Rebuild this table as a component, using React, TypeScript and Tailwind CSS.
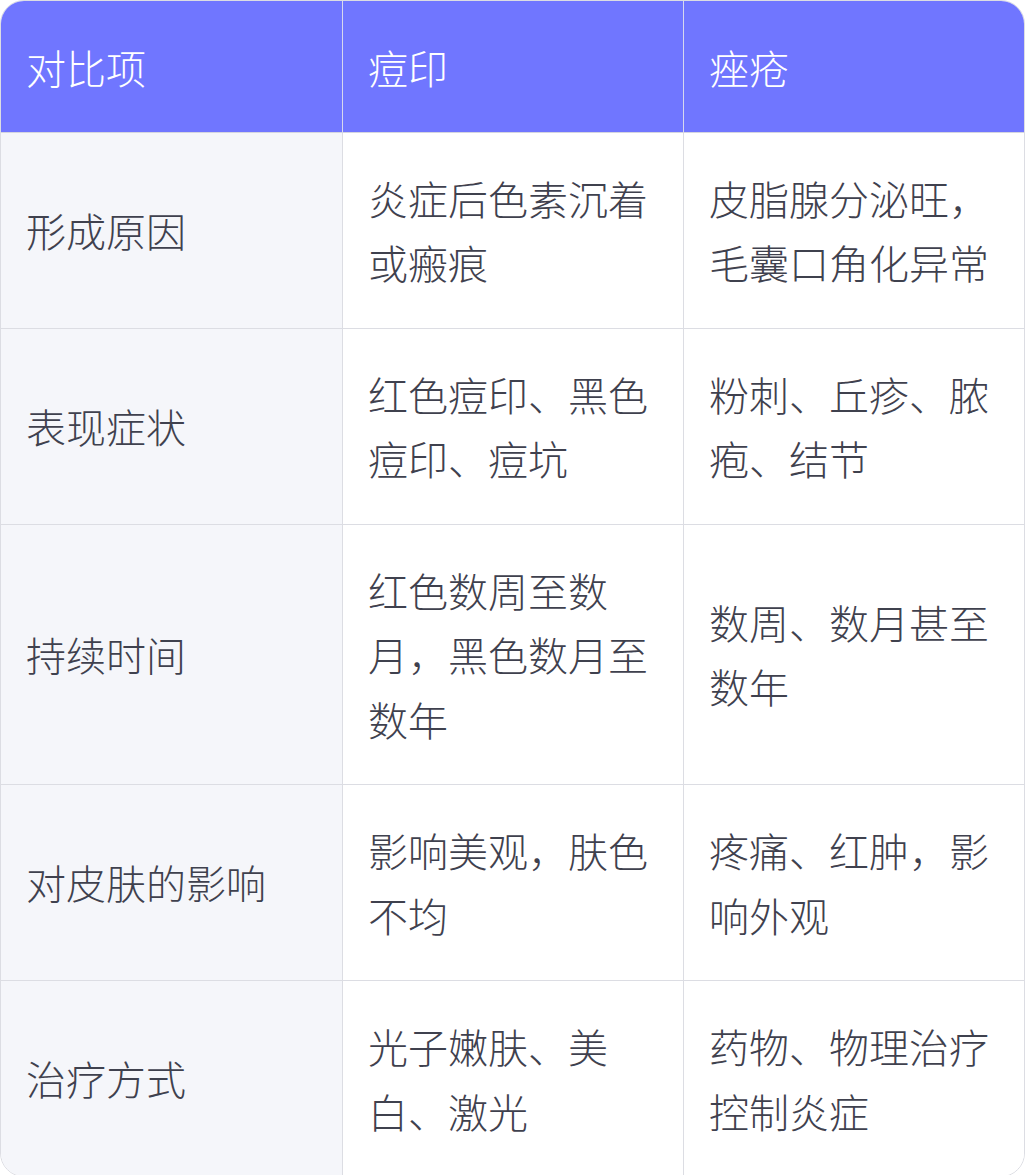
import React from "react";

const headers = ["对比项", "痘印", "痤疮"];

const rows: string[][] = [
  ["形成原因", "炎症后色素沉着或瘢痕", "皮脂腺分泌旺，毛囊口角化异常"],
  ["表现症状", "红色痘印、黑色痘印、痘坑", "粉刺、丘疹、脓疱、结节"],
  ["持续时间", "红色数周至数月，黑色数月至数年", "数周、数月甚至数年"],
  ["对皮肤的影响", "影响美观，肤色不均", "疼痛、红肿，影响外观"],
  ["治疗方式", "光子嫩肤、美白、激光", "药物、物理治疗控制炎症"],
];

const App: React.FC = () => {
  return (
    <div
      className="w-[1025px] bg-white"
      style={{ fontFamily: '"Noto Sans CJK SC", "Noto Sans", sans-serif' }}
    >
      <div className="overflow-hidden rounded-[24px] border border-[#dcdde3]">
        <div className="grid grid-cols-3">
          {headers.map((h, i) => (
            <div
              key={h}
              className={
                "flex items-center bg-[#7076ff] px-[25px] pt-[34px] pb-[32px] text-[40px] font-light leading-[64.5px] text-white border-b border-[#d4d5e0] " +
                (i > 0 ? "border-l border-l-[#d7d8ee]" : "")
              }
            >
              {h}
            </div>
          ))}
          {rows.map((row, r) =>
            row.map((cell, c) => (
              <div
                key={r + "-" + c}
                className={
                  "flex items-center px-[25px] py-[33px] text-[40px] font-light leading-[64.5px] text-[#3f414e] border-[#dcdde3] " +
                  (c === 0 ? "bg-[#f5f6fa] " : "bg-white ") +
                  (c > 0 ? "border-l " : "") +
                  (r < rows.length - 1 ? "border-b" : "")
                }
              >
                {cell}
              </div>
            ))
          )}
        </div>
      </div>
    </div>
  );
};

export default App;
